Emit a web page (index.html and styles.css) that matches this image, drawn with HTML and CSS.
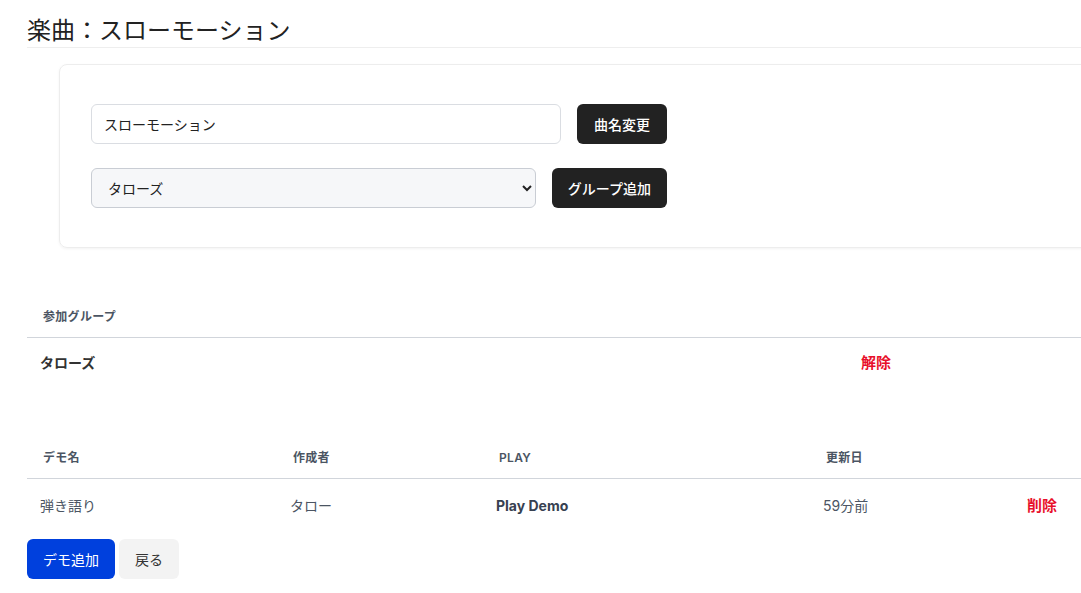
FILE: index.html
```html
<!DOCTYPE html>
<html lang="ja">
<head>
    <meta charset="UTF-8">
    <meta name="viewport" content="width=device-width, initial-scale=1.0">
    <title>楽曲：スローモーション</title>
    <link rel="stylesheet" href="styles.css">
</head>
<body>
    <div class="pagina">
        <h1 class="titulo">楽曲：スローモーション</h1>

        <!-- フォーム -->
        <div class="tarjeta">
            <div class="fila">
                <input class="campo" type="text" value="スローモーション">
                <button class="boton-negro ancho">曲名変更</button>
            </div>
            <div class="fila">
                <select class="selector">
                    <option>タローズ</option>
                </select>
                <button class="boton-negro">グループ追加</button>
            </div>
        </div>

        <!-- 参加グループ -->
        <table class="tabla tabla-grupos">
            <colgroup>
                <col style="width: 821px">
                <col>
            </colgroup>
            <thead>
                <tr><th>参加グループ</th><th></th></tr>
            </thead>
            <tbody>
                <tr>
                    <td class="negrita">タローズ</td>
                    <td><a class="rojo" href="#">解除</a></td>
                </tr>
            </tbody>
        </table>

        <!-- デモ一覧 -->
        <table class="tabla tabla-demos">
            <colgroup>
                <col style="width: 250px">
                <col style="width: 206px">
                <col style="width: 327px">
                <col style="width: 204px">
                <col>
            </colgroup>
            <thead>
                <tr><th>デモ名</th><th>作成者</th><th>PLAY</th><th>更新日</th><th></th></tr>
            </thead>
            <tbody>
                <tr>
                    <td>弾き語り</td>
                    <td>タロー</td>
                    <td><a class="enlace" href="#">Play Demo</a></td>
                    <td>59分前</td>
                    <td><a class="rojo" href="#">削除</a></td>
                </tr>
            </tbody>
        </table>

        <div class="acciones">
            <button class="boton-azul">デモ追加</button>
            <button class="boton-gris">戻る</button>
        </div>
    </div>
</body>
</html>
```

FILE: styles.css
```css
/* General */
html, body {
    overflow: hidden;
}

body {
    margin: 0;
    font-family: Inter, "Noto Sans CJK JP", sans-serif;
    color: #1f2937;
    background-color: #fff;
}

.pagina {
    width: 1100px;
    padding-left: 27px;
}

/* Título */
.titulo {
    margin: 15px 0 0;
    font-size: 24px;
    line-height: 32px;
    font-weight: 400;
    color: #222;
    border-bottom: 1px solid #eeeeee;
}

/* Tarjeta del formulario */
.tarjeta {
    margin: 16px 0 0 32px;
    padding: 39px 31px;
    border: 1px solid #ededed;
    border-radius: 8px;
    box-shadow: 0 1px 3px rgba(0, 0, 0, 0.05);
}

.fila {
    display: flex;
    gap: 16px;
    width: 576px;
}

.fila + .fila {
    margin-top: 24px;
}

.campo,
.selector {
    flex: 1;
    height: 40px;
    box-sizing: border-box;
    font-family: inherit;
    font-size: 14px;
    color: #222;
    border-radius: 6px;
}

.campo {
    padding: 0 12px;
    border: 1px solid #dadde2;
    background-color: #fff;
}

.selector {
    padding: 0 12px;
    border: 1px solid #c9cdd4;
    background-color: #f6f7f9;
}

.boton-negro {
    height: 40px;
    padding: 0 16px;
    font-family: inherit;
    font-size: 14px;
    font-weight: 500;
    color: #fff;
    background-color: #222;
    border: none;
    border-radius: 6px;
    cursor: pointer;
}

.boton-negro.ancho {
    padding: 0 17px;
}

/* Tablas */
.tabla {
    width: 1100px;
    border-collapse: collapse;
    table-layout: fixed;
    font-size: 14px;
}

.tabla-grupos {
    margin-top: 49px;
}

.tabla-demos {
    margin-top: 50px;
}

.tabla th {
    padding: 12px 16px;
    font-size: 12px;
    line-height: 16px;
    font-weight: 600;
    letter-spacing: 0.3px;
    color: #4b5563;
    text-align: left;
    border-bottom: 1px solid #d1d5db;
}

.tabla td {
    padding: 15px 13px;
    line-height: 20px;
    color: #4b5563;
}

.tabla-demos td {
    padding: 17px 13px;
}

.negrita {
    font-weight: 700;
    color: #333 !important;
}

.rojo {
    font-size: 15px;
    font-weight: 700;
    color: #e8102b;
    text-decoration: none;
}

.enlace {
    font-weight: 700;
    color: #374151;
    text-decoration: none;
}

/* Botones de abajo */
.acciones {
    display: flex;
    gap: 4px;
    margin-top: 6px;
}

.boton-azul,
.boton-gris {
    height: 40px;
    padding: 0 16px;
    font-family: inherit;
    font-size: 14px;
    border: none;
    border-radius: 6px;
    cursor: pointer;
}

.boton-azul {
    color: #fff;
    background-color: #0040dd;
}

.boton-gris {
    color: #333;
    background-color: #f3f3f3;
}
```
